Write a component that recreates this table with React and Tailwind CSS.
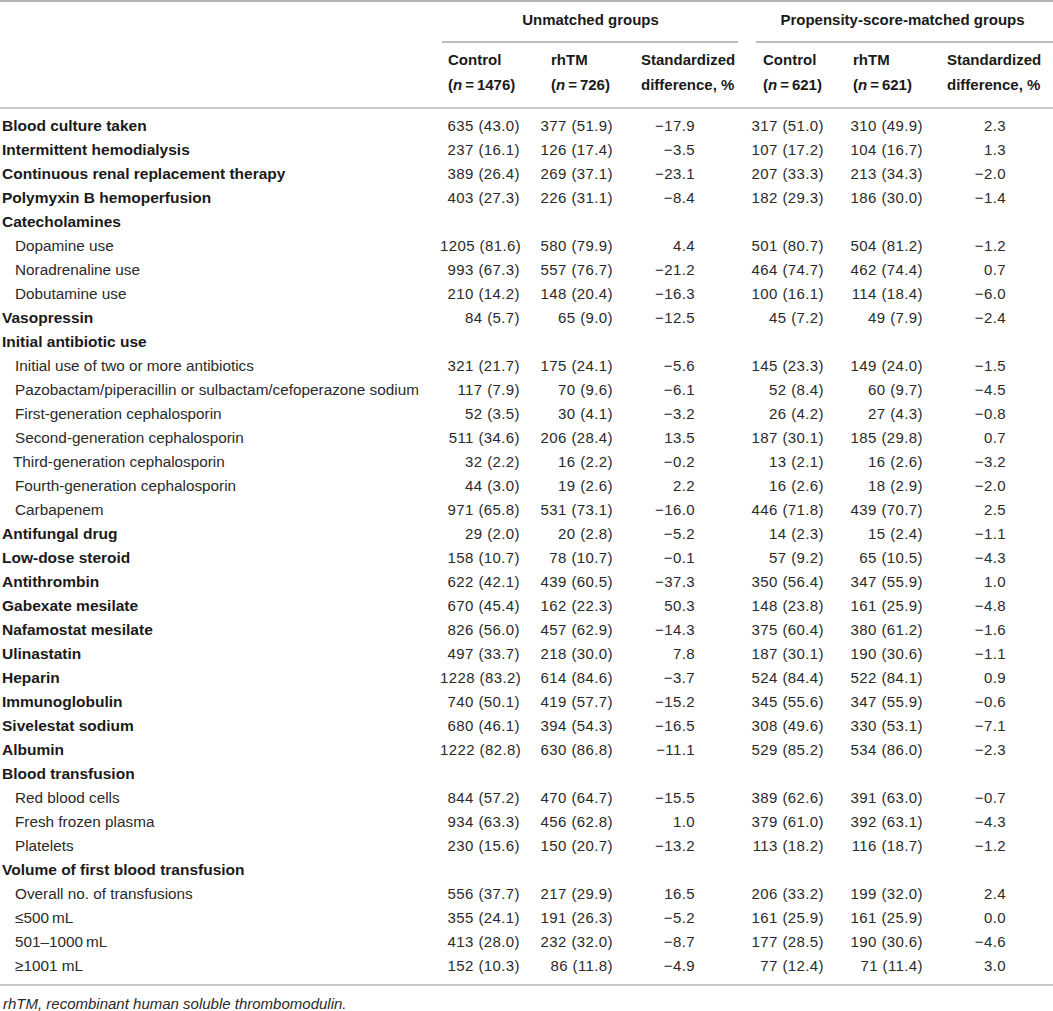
import React from "react";

const rows = [
  ["Blood culture taken", 0, "635 (43.0)", "377 (51.9)", "−17.9", "317 (51.0)", "310 (49.9)", "2.3"],
  ["Intermittent hemodialysis", 0, "237 (16.1)", "126 (17.4)", "−3.5", "107 (17.2)", "104 (16.7)", "1.3"],
  ["Continuous renal replacement therapy", 0, "389 (26.4)", "269 (37.1)", "−23.1", "207 (33.3)", "213 (34.3)", "−2.0"],
  ["Polymyxin B hemoperfusion", 0, "403 (27.3)", "226 (31.1)", "−8.4", "182 (29.3)", "186 (30.0)", "−1.4"],
  ["Catecholamines", 0],
  ["Dopamine use", 1, "1205 (81.6)", "580 (79.9)", "4.4", "501 (80.7)", "504 (81.2)", "−1.2"],
  ["Noradrenaline use", 1, "993 (67.3)", "557 (76.7)", "−21.2", "464 (74.7)", "462 (74.4)", "0.7"],
  ["Dobutamine use", 1, "210 (14.2)", "148 (20.4)", "−16.3", "100 (16.1)", "114 (18.4)", "−6.0"],
  ["Vasopressin", 0, "84 (5.7)", "65 (9.0)", "−12.5", "45 (7.2)", "49 (7.9)", "−2.4"],
  ["Initial antibiotic use", 0],
  ["Initial use of two or more antibiotics", 1, "321 (21.7)", "175 (24.1)", "−5.6", "145 (23.3)", "149 (24.0)", "−1.5"],
  ["Pazobactam/piperacillin or sulbactam/cefoperazone sodium", 1, "117 (7.9)", "70 (9.6)", "−6.1", "52 (8.4)", "60 (9.7)", "−4.5"],
  ["First-generation cephalosporin", 1, "52 (3.5)", "30 (4.1)", "−3.2", "26 (4.2)", "27 (4.3)", "−0.8"],
  ["Second-generation cephalosporin", 1, "511 (34.6)", "206 (28.4)", "13.5", "187 (30.1)", "185 (29.8)", "0.7"],
  ["Third-generation cephalosporin", 2, "32 (2.2)", "16 (2.2)", "−0.2", "13 (2.1)", "16 (2.6)", "−3.2"],
  ["Fourth-generation cephalosporin", 1, "44 (3.0)", "19 (2.6)", "2.2", "16 (2.6)", "18 (2.9)", "−2.0"],
  ["Carbapenem", 1, "971 (65.8)", "531 (73.1)", "−16.0", "446 (71.8)", "439 (70.7)", "2.5"],
  ["Antifungal drug", 0, "29 (2.0)", "20 (2.8)", "−5.2", "14 (2.3)", "15 (2.4)", "−1.1"],
  ["Low-dose steroid", 0, "158 (10.7)", "78 (10.7)", "−0.1", "57 (9.2)", "65 (10.5)", "−4.3"],
  ["Antithrombin", 0, "622 (42.1)", "439 (60.5)", "−37.3", "350 (56.4)", "347 (55.9)", "1.0"],
  ["Gabexate mesilate", 0, "670 (45.4)", "162 (22.3)", "50.3", "148 (23.8)", "161 (25.9)", "−4.8"],
  ["Nafamostat mesilate", 0, "826 (56.0)", "457 (62.9)", "−14.3", "375 (60.4)", "380 (61.2)", "−1.6"],
  ["Ulinastatin", 0, "497 (33.7)", "218 (30.0)", "7.8", "187 (30.1)", "190 (30.6)", "−1.1"],
  ["Heparin", 0, "1228 (83.2)", "614 (84.6)", "−3.7", "524 (84.4)", "522 (84.1)", "0.9"],
  ["Immunoglobulin", 0, "740 (50.1)", "419 (57.7)", "−15.2", "345 (55.6)", "347 (55.9)", "−0.6"],
  ["Sivelestat sodium", 0, "680 (46.1)", "394 (54.3)", "−16.5", "308 (49.6)", "330 (53.1)", "−7.1"],
  ["Albumin", 0, "1222 (82.8)", "630 (86.8)", "−11.1", "529 (85.2)", "534 (86.0)", "−2.3"],
  ["Blood transfusion", 0],
  ["Red blood cells", 1, "844 (57.2)", "470 (64.7)", "−15.5", "389 (62.6)", "391 (63.0)", "−0.7"],
  ["Fresh frozen plasma", 1, "934 (63.3)", "456 (62.8)", "1.0", "379 (61.0)", "392 (63.1)", "−4.3"],
  ["Platelets", 1, "230 (15.6)", "150 (20.7)", "−13.2", "113 (18.2)", "116 (18.7)", "−1.2"],
  ["Volume of first blood transfusion", 0],
  ["Overall no. of transfusions", 1, "556 (37.7)", "217 (29.9)", "16.5", "206 (33.2)", "199 (32.0)", "2.4"],
  ["≤500\u2009mL", 1, "355 (24.1)", "191 (26.3)", "−5.2", "161 (25.9)", "161 (25.9)", "0.0"],
  ["501–1000\u2009mL", 1, "413 (28.0)", "232 (32.0)", "−8.7", "177 (28.5)", "190 (30.6)", "−4.6"],
  ["≥1001 mL", 1, "152 (10.3)", "86 (11.8)", "−4.9", "77 (12.4)", "71 (11.4)", "3.0"],
];

const grid = "grid grid-cols-[440px_95px_100px_110px_100px_95px_113px]";
const valPad = ["pr-[15px]", "pr-[22px]", "pr-[50px]", "pr-[21px]", "pr-[17px]", "pr-[47px]"];

function N({ v }) {
  return (
    <>
      (<span className="italic">n</span>
      {"\u2009=\u2009"}
      {v})
    </>
  );
}

export default function App() {
  return (
    <div
      className="w-[1053px] h-[1011px] bg-white text-[#1a1a1a] text-[15px] leading-none overflow-hidden"
      style={{ fontFamily: '"Liberation Sans", Arial, Helvetica, sans-serif' }}
    >
      <div className="h-[2px] bg-[#b4b4b4]" />
      {/* Group header */}
      <div className={grid + " font-bold"}>
        <div />
        <div className="col-span-3 pl-[2px] flex flex-col">
          <div className="h-[39px] flex items-center justify-center pb-[4px] pr-[6px]">Unmatched groups</div>
          <div className="h-[2px] bg-[#bdbdbd] ml-0 mr-[7px]" />
        </div>
        <div className="col-span-3 pl-[11px] flex flex-col">
          <div className="h-[39px] flex items-center justify-center pb-[4px] pr-[4px]">Propensity-score-matched groups</div>
          <div className="h-[2px] bg-[#bdbdbd]" />
        </div>
      </div>
      {/* Column header */}
      <div className={grid + " font-bold pt-[8px] pb-[14px]"}>
        <div />
        {[
          ["pl-[8px]", "Control", <N v="1476" />],
          ["pl-[16px]", "rhTM", <N v="726" />],
          ["pl-[6px]", "Standardized", "difference, %"],
          ["pl-[18px]", "Control", <N v="621" />],
          ["pl-[8px]", "rhTM", <N v="621" />],
          ["pl-[7px]", "Standardized", "difference, %"],
        ].map(([p, a, b], i) => (
          <div key={i} className={p + " flex flex-col gap-[8px] whitespace-nowrap"}>
            <div className="h-[17px] flex items-center">{a}</div>
            <div className="h-[17px] flex items-center">{b}</div>
          </div>
        ))}
      </div>
      <div className="h-[2px] bg-[#c8c8c8]" />
      {/* Body */}
      <div className="pt-[5px] pb-[6px]">
        {rows.map(([label, ind, ...vals], i) => (
          <div key={i} className={grid + " h-[24px] leading-[24px]"}>
            <div
              className={
                "whitespace-nowrap " +
                (ind === 0
                  ? "font-bold text-[15.5px] pl-[2px]"
                  : ind === 1
                  ? "pl-[15px] text-[15.3px] text-[#2a2a2a]"
                  : "pl-[13px] text-[15.3px] text-[#2a2a2a]")
              }
            >
              {label}
            </div>
            {vals.map((v, j) => (
              <div
                key={j}
                className={"text-right whitespace-nowrap tracking-[0.4px] text-[#2a2a2a] " + valPad[j]}
              >
                {v}
              </div>
            ))}
          </div>
        ))}
      </div>
      <div className="h-[2px] bg-[#c8c8c8]" />
      <div className="pt-[9px] pl-[3px] italic text-[15px] leading-[18px] text-[#2a2a2a]">
        rhTM, recombinant human soluble thrombomodulin.
      </div>
    </div>
  );
}
